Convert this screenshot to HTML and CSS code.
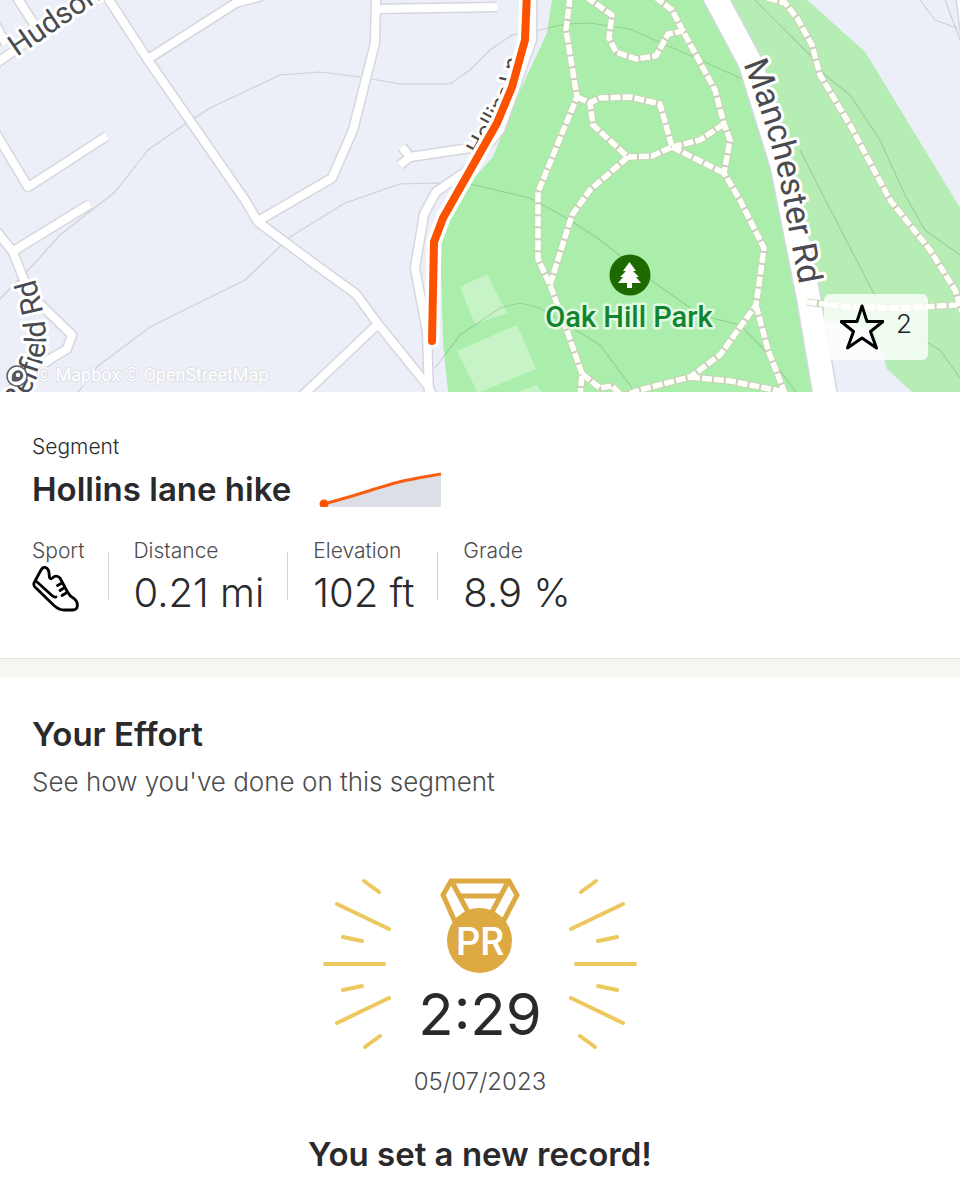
FILE: index.html
```html
<!DOCTYPE html>
<html lang="en">
<head>
    <meta charset="UTF-8">
    <meta name="viewport" content="width=device-width, initial-scale=1.0">
    <title>Hollins lane hike</title>
    <link rel="stylesheet" href="styles.css">
</head>
<body>
    <div class="map">
        <svg class="map-canvas" viewBox="0 0 960 392" role="img" aria-label="Segment map">
            <defs>
                <g id="roads">
                    <path d="M-5 64L40 33L108 -12M12 -10L34 24M-6 22L6 44"/>
                    <path d="M104 -8L148 60L245 200L258 222L320 268L356 294L378 324L428 386L434 400"/>
                    <path d="M148 59L236 3L262 -4"/>
                    <path d="M376 -5L375 43L353 130L332 178L258 221M375 9L497 7"/>
                    <path d="M-5 132L28 187L107 136"/>
                    <path d="M-6 228L13 252L28 290L40 304L72 335L67 349L50 359L8 392M12 252L90 204"/>
                    <path d="M378 324L302 396"/>
                    <path d="M532 -5L532 40L500 130L465 172L436 192L424 214L415 268L427 332L429 396"/>
                    <path d="M402 147L410 157L400 165M410 157L470 148"/>
                    <path d="M960 -8L966 40"/>
                </g>
                <g id="trails">
                    <path d="M570 -3L566 30L577 97L538 192L538 259L550 285L565 325L582 374L580 396"/>
                    <path d="M577 97L590 103L600 98L630 97L660 104L672 147L652 156L628 157L593 125L590 103"/>
                    <path d="M628 157L590 190L572 215L550 285"/>
                    <path d="M586 -3L612 15L609 38L616 52L636 59L656 56L668 34L683 31"/>
                    <path d="M655 -3L672 10L683 31L715 90L724 124L730 140L724 173L740 200L764 248L756 305L720 355L690 377L640 390L620 397"/>
                    <path d="M672 147L700 140L724 124M672 147L724 173"/>
                    <path d="M756 305L768 350L786 396M690 377L730 381L785 392"/>
                    <path d="M768 -2L785 3L797 18L812 45L820 75L850 125L890 200L930 250L955 290L962 312"/>
                    <path d="M805 302L850 307L900 308L957 305M582 374L600 388L612 386L622 396"/>
                </g>
                <path id="hudson" d="M17 57L125 -17"/>
                <path id="belfield" d="M18 412Q45 372 46 340Q46 308 24 245"/>
                <path id="hollins" d="M480 156L513 95L530 20"/>
                <path id="manchester" d="M743 64Q768 125 780 183L804 310"/>
            </defs>

            <rect width="960" height="392" fill="#eceff8"/>

            <!-- park -->
            <path d="M552 0L547 33L517 97L493 157L463 190L440 242L443 342L448 392H960V208L865 52L807 0Z" fill="#abeeac"/>
            <path d="M715 0L755 70L785 180L809 300L824 392H960V208L865 52L807 0Z" fill="#b5edb5"/>
            <path d="M822 320L870 330L882 352L887 369L912 392H828Z" fill="#eceff8"/>
            <path d="M460 287L487 274L507 313L475 324ZM457 351L517 325L536 369L478 393ZM518 392L537 385L541 392Z" fill="#c6f4c7"/>

            <!-- contours -->
            <g class="contour">
                <path d="M0 299L33 265L60 235L115 192L148 150L178 129L210 108L280 75L320 72L360 77L400 84L450 84L470 70L490 50L512 35L540 30L565 24L590 23L630 29L700 60L745 80"/>
                <path d="M78 392L98 366L150 327L245 280L290 237L345 203L400 184L435 183L470 184L530 198L570 220L600 240L655 283L700 315L740 325L760 345L796 392"/>
                <path d="M435 368L460 335L500 308L520 303L540 308L600 345L632 388"/>
                <path d="M755 0L810 55L825 75L850 95L880 140L905 195L925 230L960 255"/>
                <path d="M800 150L828 205L872 290L890 320L940 350L960 378M920 0L935 20L957 28M944 -3L960 40"/>
            </g>

            <!-- roads and trails -->
            <use href="#roads" class="road-casing"/>
            <use href="#roads" class="road"/>
            <use href="#trails" class="trail-casing"/>
            <use href="#trails" class="trail"/>
            <path class="highway-casing" d="M706 -20L750 62L782 165L809 300L826 400"/>
            <path class="highway" d="M706 -20L750 62L782 165L809 300L826 400"/>
            <path class="trail-casing" d="M807 302L830 305"/>
            <path class="trail" d="M807 302L830 305"/>

            <g class="road-label">
                <text font-size="30"><textPath href="#hudson">Hudson</textPath></text>
                <text font-size="30"><textPath href="#belfield">Belfield Rd</textPath></text>
                <text font-size="24"><textPath href="#hollins">Hollins Ln</textPath></text>
                <text font-size="34"><textPath href="#manchester">Manchester Rd</textPath></text>
            </g>

            <!-- segment route -->
            <path class="route-halo" d="M527 -8L525 40L512 87L497 123L443 218L434 242L432 341"/>
            <path class="route" d="M527 -8L525 40L512 87L497 123L443 218L434 242L432 341"/>

            <circle cx="630" cy="275" r="20.500" fill="#1f6a00"/>
            <path d="M629.500 262L636 271H633L639 277H636L641 283H632V288H627V283H618L623 277H620L626 271H623Z" fill="#fff"/>
            <text class="park-label" x="629" y="327">Oak Hill Park</text>

            <circle cx="17" cy="376" r="10" fill="#fff" stroke="#5c5f66" stroke-width="1.500"/>
            <path d="M12 381Q11 374 14 372A5 5 0 0 1 22 379Q18 383 12 381Z" fill="#55585f"/>
            <circle cx="18" cy="375" r="2.200" fill="#fff"/>
            <text class="attribution" x="37" y="381">© Mapbox © OpenStreetMap</text>
        </svg>
        <button class="star-button" type="button" aria-label="Star segment, 2 stars">
            <svg width="44" height="46" viewBox="0 0 44 46" fill="none" stroke="#000" stroke-width="3" stroke-linejoin="round">
                <path d="M22 2L27 17.500H43L30.500 27.500L36.500 44L22 34L7.500 44L13.500 27.500L1 17.500H17Z"/>
            </svg>
            <span>2</span>
        </button>
    </div>

    <section class="segment">
        <p class="label">Segment</p>
        <div class="title-row">
            <h1>Hollins lane hike</h1>
            <svg width="122" height="36" viewBox="0 0 122 36" aria-hidden="true">
                <path d="M5 33L35 24.500Q65 15 76 12T122 3V36H5Z" fill="#dcdfe5"/>
                <path d="M5 33L35 24.500Q65 15 76 12T122 3" fill="none" stroke="#f85e10" stroke-width="3"/>
                <circle cx="5" cy="33" r="4.500" fill="#fc5200"/>
            </svg>
        </div>
        <dl class="stats">
            <div class="stat">
                <dt>Sport</dt>
                <dd>
                    <svg class="shoe" width="48" height="48" viewBox="0 0 48 48" fill="none" stroke="#000" stroke-width="2.800" stroke-linecap="round" stroke-linejoin="round" role="img" aria-label="Hike">
                        <path d="M2.500 17L9 5Q10.500 2 13.500 2.500Q17 4 17 8L17.500 12.500Q19 15 21 12.500Q24 9.500 28 13L35.500 27Q37.500 31 42 33.500Q46.500 37 45 42.500Q44 45 40 45H32Q27 45 22 40.500L4 23Q0.500 20 2.500 17Z"/>
                        <path d="M4.500 16.500L20 30.500Q22.500 32.500 24 32M30 18L25.500 20.500M32.500 22.500L28 25.500M35 27.500L30 30.500"/>
                    </svg>
                </dd>
            </div>
            <div class="stat">
                <dt>Distance</dt>
                <dd>0.21 mi</dd>
            </div>
            <div class="stat">
                <dt>Elevation</dt>
                <dd>102 ft</dd>
            </div>
            <div class="stat">
                <dt>Grade</dt>
                <dd>8.9 %</dd>
            </div>
        </dl>
    </section>

    <section class="effort">
        <h2>Your Effort</h2>
        <p class="subtitle">See how you've done on this segment</p>
        <div class="record">
            <svg class="rays" width="68" height="172" viewBox="0 0 68 172" aria-hidden="true">
                <path d="M41 3L56 14M14 26L66 51M20 59L39 63M2 86H61M20 112L39 108M14 145L66 120M42 169L57 158"/>
            </svg>
            <div class="record-main">
                <svg width="80" height="96" viewBox="0 0 80 96" role="img" aria-label="Personal record">
                    <path d="M16 46L3 17L11 3H69L77 17L62 46M12 4L28 34M68 4L52 34M20 18H60" fill="none" stroke="#dca942" stroke-width="5"/>
                    <circle cx="39.500" cy="62.500" r="32.500" fill="#dca942"/>
                    <text class="medal-text" x="40" y="77">PR</text>
                </svg>
                <p class="time">2:29</p>
            </div>
            <svg class="rays rays-right" width="68" height="172" viewBox="0 0 68 172" aria-hidden="true">
                <path d="M41 3L56 14M14 26L66 51M20 59L39 63M2 86H61M20 112L39 108M14 145L66 120M42 169L57 158"/>
            </svg>
        </div>
        <p class="date">05/07/2023</p>
        <h2 class="message">You set a new record!</h2>
    </section>
</body>
</html>
```
FILE: styles.css
```css
* {
    box-sizing: border-box;
}
body {
    margin: 0;
    font-family: Inter, "Liberation Sans", sans-serif;
    background-color: #ffffff;
    color: #2a2a2c;
}
h1, h2, p, dl, dd {
    margin: 0;
}
h1, h2 {
    font-size: 33px;
    line-height: 44px;
    font-weight: 600;
}

/* map */
.map {
    position: relative;
}
.map-canvas {
    display: block;
    width: 100%;
    height: auto;
}
.contour {
    fill: none;
    stroke: #000000;
    stroke-opacity: 0.13;
    stroke-width: 1.2;
}
.road-casing, .road, .highway-casing, .highway, .trail-casing, .trail, .route, .route-halo {
    fill: none;
    stroke-linejoin: round;
}
.road-casing {
    stroke: #d4d7dd;
    stroke-width: 11;
}
.road {
    stroke: #ffffff;
    stroke-width: 8;
}
.highway-casing {
    stroke: #d3d9de;
    stroke-width: 26;
}
.highway {
    stroke: #ffffff;
    stroke-width: 23;
}
.trail-casing {
    stroke: #cbcfb9;
    stroke-width: 7;
}
.trail {
    stroke: #fffffa;
    stroke-width: 5.5;
    stroke-dasharray: 10 2;
}
.route-halo {
    stroke: #ffffff;
    stroke-width: 15;
    stroke-linecap: round;
}
.route {
    stroke: #fc5200;
    stroke-width: 8;
    stroke-linecap: round;
}
.road-label text {
    font-family: Roboto, "Liberation Sans", sans-serif;
    fill: #4a4b50;
    stroke: #ffffff;
    stroke-width: 6px;
    stroke-linejoin: round;
    paint-order: stroke;
}
.park-label {
    font-family: Roboto, "Liberation Sans", sans-serif;
    font-size: 29px;
    font-weight: 500;
    text-anchor: middle;
    fill: #118430;
    stroke: #e2fae2;
    stroke-width: 5px;
    stroke-linejoin: round;
    paint-order: stroke;
}
.attribution {
    font-family: Roboto, "Liberation Sans", sans-serif;
    font-size: 18px;
    fill: #ffffff;
    stroke: #dfe1e8;
    stroke-width: 2px;
    paint-order: stroke;
}
.star-button {
    position: absolute;
    right: 32px;
    bottom: 32px;
    display: flex;
    align-items: center;
    gap: 12px;
    padding: 10px 16px;
    border: none;
    border-radius: 6px;
    background-color: rgba(255, 255, 255, 0.8);
    color: #1c1c1e;
    font-family: inherit;
    font-size: 26px;
    font-weight: 300;
    line-height: 40px;
    cursor: pointer;
}
.star-button span {
    padding-bottom: 6px;
}

/* segment summary */
.segment {
    padding: 41px 32px;
    border-bottom: 1px solid #e3e3e0;
}
.label {
    font-size: 21px;
    line-height: 28px;
    font-weight: 300;
}
.title-row {
    display: flex;
    align-items: center;
    gap: 28px;
    margin-top: 6px;
}
.stats {
    display: flex;
    align-items: center;
    margin-top: 26px;
}
.stat {
    position: relative;
    padding-right: 24px;
    margin-right: 25px;
}
.stat:not(:last-child)::after {
    content: "";
    position: absolute;
    right: 0;
    top: 15px;
    width: 1px;
    height: 48px;
    background-color: #d2d2d4;
}
.stat dt {
    font-size: 21px;
    line-height: 28px;
    font-weight: 300;
    color: #4c4c4e;
}
.stat dd {
    font-size: 40px;
    line-height: 56px;
    font-weight: 300;
    height: 52px;
}
.shoe {
    display: block;
}

/* effort */
.effort {
    padding: 35px 32px 24px;
    border-top: 18px solid #f8f6f2;
}
.subtitle {
    margin-top: 10px;
    font-size: 26px;
    line-height: 32px;
    font-weight: 300;
    color: #4c4c4e;
}
.record {
    display: flex;
    justify-content: center;
    margin-top: 80px;
}
.rays {
    fill: none;
    stroke: #ecc85f;
    stroke-width: 4;
    stroke-linecap: round;
}
.rays-right {
    transform: scaleX(-1);
}
.record-main {
    display: flex;
    flex-direction: column;
    align-items: center;
    width: 178px;
}
.medal-text {
    font-family: Roboto, "Liberation Sans", sans-serif;
    font-size: 38px;
    font-weight: 500;
    text-anchor: middle;
    fill: #ffffff;
}
.time {
    font-size: 58px;
    line-height: 80px;
}
.date {
    margin-top: 12px;
    font-size: 24px;
    line-height: 32px;
    font-weight: 300;
    color: #4c4c4e;
    text-align: center;
}
.message {
    margin-top: 34px;
    text-align: center;
}
```
